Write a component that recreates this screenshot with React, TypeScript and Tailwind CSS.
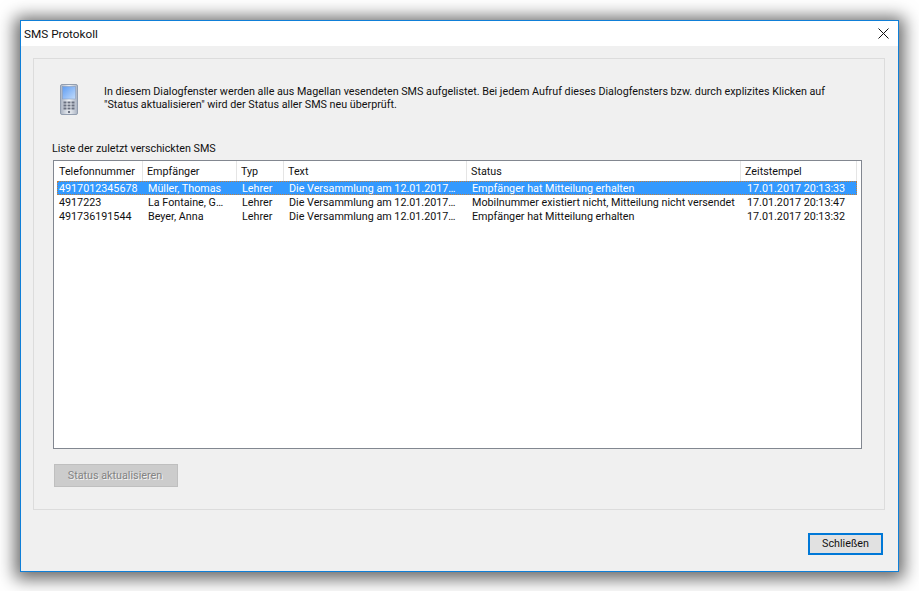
const COLS = "grid w-[800px] grid-cols-[86px_94px_47px_183px_274px_116px]";

const rows = [
  ["4917012345678", "Müller, Thomas", "Lehrer", "Die Versammlung am 12.01.2017…", "Empfänger hat Mitteilung erhalten", "17.01.2017 20:13:33"],
  ["4917223", "La Fontaine, G…", "Lehrer", "Die Versammlung am 12.01.2017…", "Mobilnummer existiert nicht, Mitteilung nicht versendet", "17.01.2017 20:13:47"],
  ["491736191544", "Beyer, Anna", "Lehrer", "Die Versammlung am 12.01.2017…", "Empfänger hat Mitteilung erhalten", "17.01.2017 20:13:32"],
];

const headers = ["Telefonnummer", "Empfänger", "Typ", "Text", "Status", "Zeitstempel"];

function Phone() {
  return (
    <svg width="19" height="32" viewBox="0 0 19 32">
      <defs>
        <linearGradient id="body" x1="0" y1="0" x2="1" y2="0">
          <stop offset="0" stopColor="#aab3c2" />
          <stop offset="0.5" stopColor="#eef1f5" />
          <stop offset="1" stopColor="#aab3c2" />
        </linearGradient>
        <linearGradient id="screen" x1="0" y1="0" x2="1" y2="1">
          <stop offset="0" stopColor="#5e9cf2" />
          <stop offset="1" stopColor="#c3dcfb" />
        </linearGradient>
      </defs>
      <rect x="0.5" y="0.5" width="17" height="30" rx="1.5" fill="url(#body)" stroke="#939eaf" />
      <rect x="2.5" y="2.5" width="13" height="12.5" fill="url(#screen)" stroke="#8296b5" strokeWidth="0.5" />
      {[17.5, 20.5, 23.5].map((y) =>
        [3.5, 7.5, 11.5].map((x) => <rect key={`${x}-${y}`} x={x} y={y} width="3" height="2" fill="#6a7180" />)
      )}
      <circle cx="9" cy="28" r="1.2" fill="#6a7180" />
    </svg>
  );
}

export default function App() {
  return (
    <div className="w-[919px] h-[591px] overflow-hidden bg-white pl-[20px] pt-[20px] font-['Roboto','Noto_Sans',sans-serif] text-[10.75px] leading-[14px] text-[#111]">
      <div className="w-[879px] h-[552px] border border-[#0f7fd8] bg-[#f0f0f0] flex flex-col shadow-[0_2px_16px_5px_rgba(0,0,0,0.6)]">
        <div className="h-[25px] bg-white flex items-center justify-between pl-[3px] pr-[8px] shrink-0">
          <span className="text-[11.75px]">SMS Protokoll</span>
          <svg width="11" height="11" viewBox="0 0 11 11" className="mr-[1px]">
            <path d="M0.5 0.5L10.5 10.5M10.5 0.5L0.5 10.5" stroke="#111" strokeWidth="1" fill="none" />
          </svg>
        </div>
        <div className="mt-[12px] ml-[12px] w-[852px] h-[452px] border border-[#dcdcdc] shrink-0 flex flex-col">
          <div className="flex h-[83px] shrink-0">
            <div className="ml-[26px] mt-[25px]"><Phone /></div>
            <p className="ml-[25px] mt-[26px] w-[740px] leading-[13px]">
              In diesem Dialogfenster werden alle aus Magellan vesendeten SMS aufgelistet. Bei jedem Aufruf dieses Dialogfensters bzw. durch explizites Klicken auf "Status aktualisieren" wird der Status aller SMS neu überprüft.
            </p>
          </div>
          <div className="ml-[18px] h-[14px]">Liste der zuletzt verschickten SMS</div>
          <div className="ml-[19px] mt-[4px] w-[809px] h-[289px] border border-[#828790] bg-white shrink-0">
            <div className={`${COLS} h-[20px] ml-[3px] items-center`}>
              {headers.map((h, i) => (
                <div key={h} className={`h-[20px] pt-[1px] flex items-center border-r border-[#e5e5e5] ${i === 0 ? "pl-[2px]" : "pl-[4px]"}`}>{h}</div>
              ))}
            </div>
            {rows.map((r, idx) => (
              <div
                key={r[0]}
                className={`${COLS} h-[14px] ml-[3px] ${idx === 0 ? "bg-[#3399ff] text-white outline-1 outline-dotted -outline-offset-1 outline-[#c08040]" : ""}`}
              >
                {r.map((c, i) => (
                  <div key={i} className={`whitespace-nowrap h-[14px] pt-[1px] leading-[13px] ${i === 0 ? "pl-[2px]" : i === 5 ? "pl-[6px]" : "pl-[5px]"}`}>{c}</div>
                ))}
              </div>
            ))}
          </div>
          <div className="ml-[20px] mt-[15px] w-[124px] h-[23px] pr-[2px] bg-[#cccccc] border border-[#bfbfbf] text-[#838383] [text-shadow:1px_1px_0_#f2f2f2] flex items-center justify-center">
            Status aktualisieren
          </div>
        </div>
        <div className="flex justify-end pr-[15px] pt-[23px]">
          <div className="w-[75px] h-[22px] bg-[#e1e1e1] border-2 border-[#0078d7] flex items-center justify-center">Schließen</div>
        </div>
      </div>
    </div>
  );
}
